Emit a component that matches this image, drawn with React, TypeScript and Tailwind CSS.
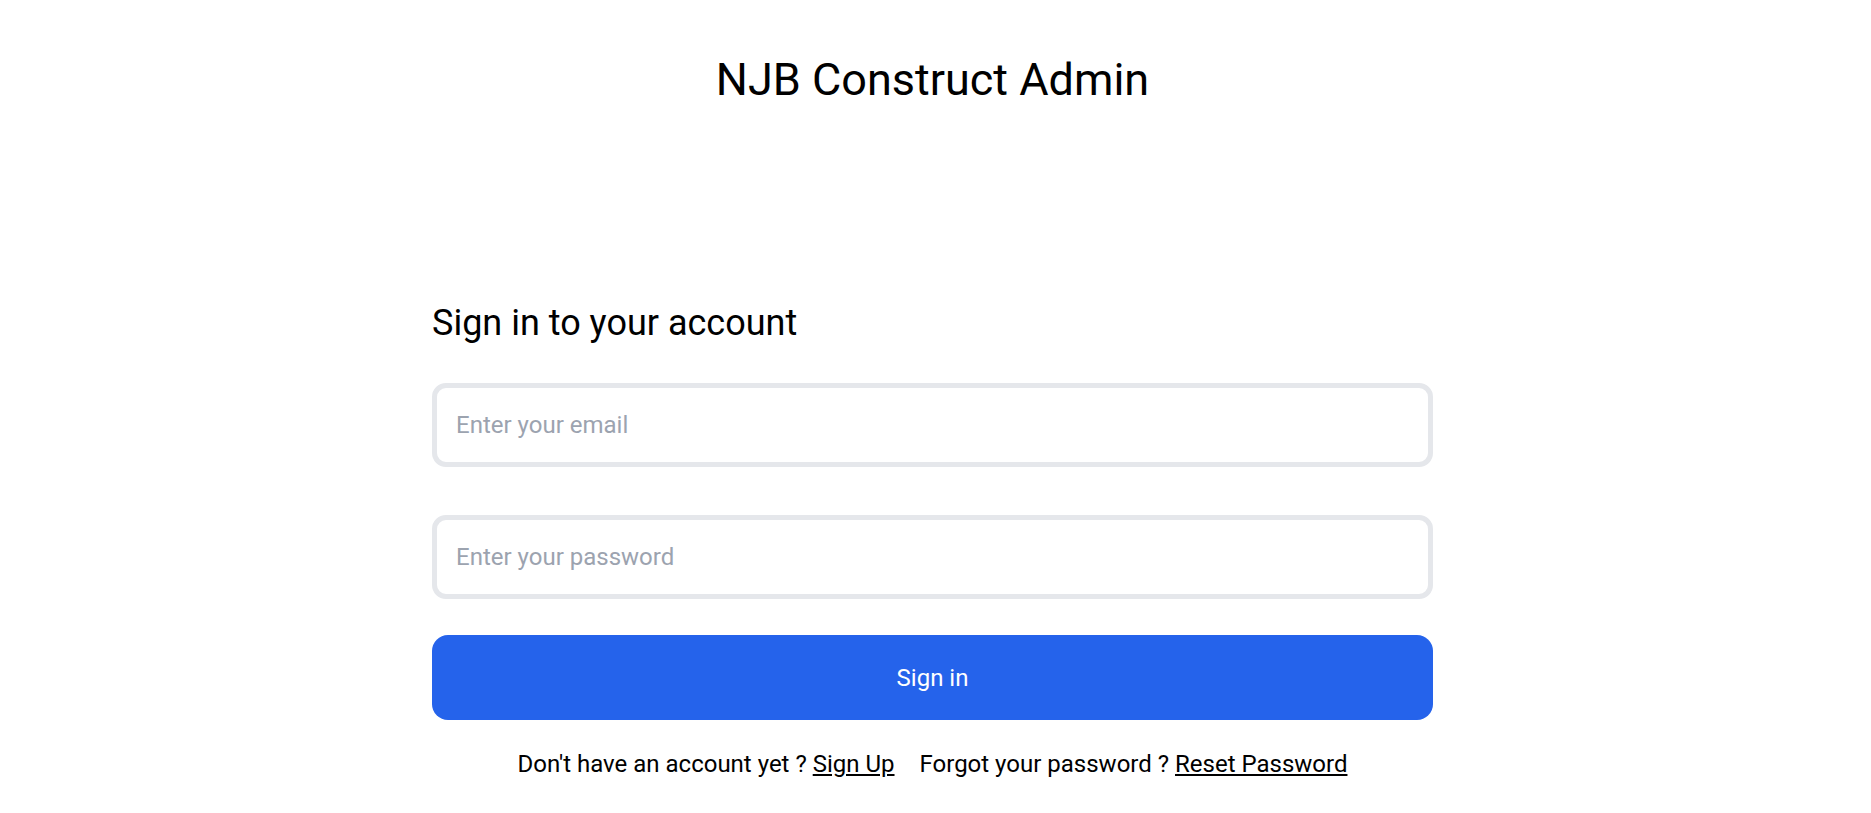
export default function App() {
  return (
    <div className="min-h-screen bg-white text-black" style={{ fontFamily: 'Roboto, "Liberation Sans", sans-serif' }}>
      <div className="pt-[53px] text-center -translate-x-[3px]">
        <h1 className="text-[45px] leading-[53px] font-normal">NJB Construct Admin</h1>
      </div>

      <div className="mx-auto mt-[196px] w-[1001px] -translate-x-[3px]">
        <h2 className="text-[36px] leading-[42px] font-normal mb-[39px]">Sign in to your account</h2>

        <form className="flex flex-col" onSubmit={(e) => e.preventDefault()}>
          <input
            type="email"
            placeholder="Enter your email"
            className="h-[84px] w-full rounded-[14px] border-[5px] border-[#e5e7eb] px-[19px] text-[24px] outline-none placeholder:text-[#9ca3af]"
          />
          <input
            type="password"
            placeholder="Enter your password"
            className="mt-[48px] h-[84px] w-full rounded-[14px] border-[5px] border-[#e5e7eb] px-[19px] text-[24px] outline-none placeholder:text-[#9ca3af]"
          />
          <button
            type="submit"
            className="mt-[36px] flex h-[85px] w-full items-center justify-center rounded-[16px] bg-[#2563eb] text-[24px] text-white"
          >
            Sign in
          </button>
        </form>

        <div className="mt-[30px] flex justify-center gap-[25px] text-[24px] leading-[28px]">
          <p>
            Don't have an account yet ? <a href="#" className="underline">Sign Up</a>
          </p>
          <p>
            Forgot your password ? <a href="#" className="underline">Reset Password</a>
          </p>
        </div>
      </div>
    </div>
  );
}
